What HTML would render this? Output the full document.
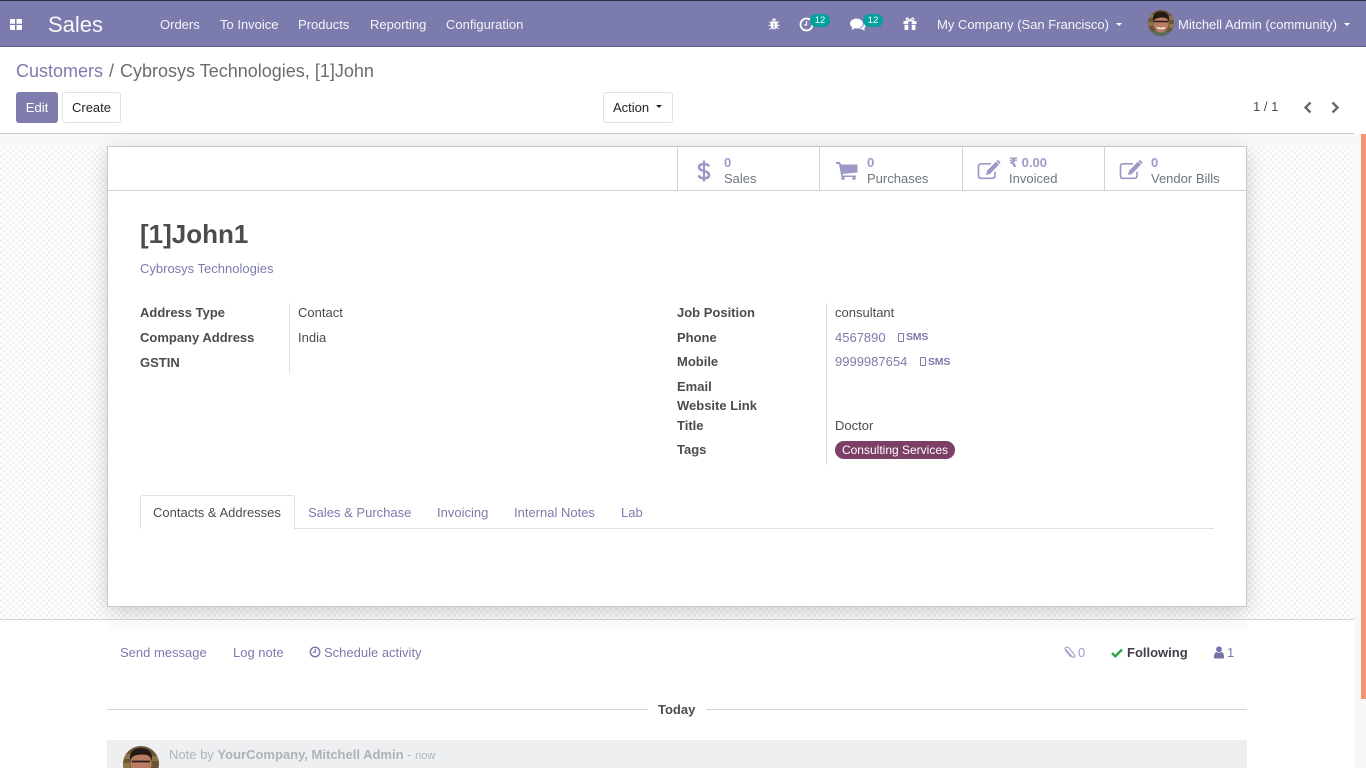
<!DOCTYPE html>
<html lang="en"><head><meta charset="utf-8"><title>Cybrosys Technologies, [1]John</title>
<style>
*{box-sizing:border-box}
html,body{margin:0;padding:0;width:1366px;height:768px;overflow:hidden;background:#fff;font-family:"Liberation Sans",sans-serif;font-size:13px;color:#4c4c4c}
.a{position:absolute;white-space:nowrap;line-height:20px}
.nav{color:#fff;opacity:.92}
.l{color:#7C7BAD}
.b{font-weight:700}
svg{position:absolute;display:block}
.badge{position:absolute;background:#00A09D;color:#fff;border-radius:7px;font-size:9.5px;line-height:13px;height:13px;width:20px;text-align:center}
.stat{position:absolute;top:147px;height:43px;border-left:1px solid #ced4da}
</style></head><body>

<div style="position:absolute;left:0;top:0;width:1366px;height:47px;background:#7C7BAD;border-top:1px solid #2a2a40;border-bottom:1px solid #62619a"></div>
<svg style="left:10px;top:19px" width="12" height="11" viewBox="0 0 12 11"><path fill="#fff" d="M0 1q0-1 1-1h4v4.800H0zM6.500 0H11q1 0 1 1v3.800H6.500zM0 6h5v5H1q-1 0-1-1zM6.500 6H12v4q0 1-1 1H6.500z"/></svg>
<div class="a" style="left:48px;top:12px;font-size:22px;line-height:26px;color:#fff;opacity:.95">Sales</div>
<div class="a nav" style="left:160px;top:15px">Orders</div>
<div class="a nav" style="left:220px;top:15px">To Invoice</div>
<div class="a nav" style="left:298px;top:15px">Products</div>
<div class="a nav" style="left:370px;top:15px">Reporting</div>
<div class="a nav" style="left:446px;top:15px">Configuration</div>

<svg style="left:768px;top:18px" width="12" height="12" viewBox="0 0 12 12"><path fill="#fff" d="M4 2.500a2 2 0 0 1 4 0zM3.200 3.300h5.600L9 4.500l1.500-1.300.6.700L9.300 5.600v1.300h2.200v1H9.300l-.2 1.100 1.900 1.500-.6.700-1.700-1.400Q7.700 11.500 6.400 11.500V5H5.600v6.500q-1.300 0-2.100-1.200L1.800 11.700l-.6-.7 1.900-1.500L2.900 7.900H.5v-1h2.200V5.600L.9 3.900l.6-.7L3 4.500z"/></svg>
<svg style="left:799px;top:17px" width="15" height="15" viewBox="0 0 15 15"><circle cx="7.500" cy="7.500" r="6" fill="none" stroke="#fff" stroke-width="1.800"/><path d="M7.500 4v4H5.300" fill="none" stroke="#fff" stroke-width="1.200"/></svg>
<div class="badge" style="left:810px;top:14px;width:20px">12</div>
<svg style="left:850px;top:18px" width="16" height="14" viewBox="0 0 16 14"><ellipse cx="6.500" cy="5.500" rx="6.500" ry="5" fill="#fff"/><path fill="#fff" d="M2.500 8.500 1.500 12l4-2zM13.500 4.500Q16 6 15.500 8.500 15 10 14 10.500l1 2.500-3.500-2q-2 .2-3.500-.5 4 0 5.500-3 .6-1.500 0-3z"/></svg>
<div class="badge" style="left:863px;top:14px;width:20px">12</div>
<svg style="left:903px;top:17px" width="14" height="14" viewBox="0 0 14 14"><path fill="#fff" d="M.5 4h4.800v3H.5zM8.700 4h4.800v3H8.700zM1.500 7.800h3.800V13H2.500q-1 0-1-1zM8.700 7.800h3.800V12q0 1-1 1H8.700z"/><path fill="none" stroke="#fff" stroke-width="1.200" d="M7 3.800 5 1.200Q3.500.5 3.200 2t3.800 1.800zM7 3.800 9 1.200q1.500-.7 1.800.8T7 3.800z"/></svg>
<div class="a nav" style="left:937px;top:15px">My Company (San Francisco)</div>
<div style="position:absolute;left:1116px;top:23px;border:3.500px solid transparent;border-top-color:#fff;border-bottom:0;width:0;height:0"></div>
<svg style="left:1148px;top:10px" width="26" height="26" viewBox="0 0 26 26"><defs><clipPath id="c1"><circle cx="13" cy="13" r="13"/></clipPath></defs><g clip-path="url(#c1)"><rect width="26" height="26" fill="#6b5536"/><rect x="0" y="4" width="5" height="4" fill="#8f7448"/><rect x="0" y="12" width="5" height="4" fill="#8f7448"/><rect x="21" y="6" width="5" height="4" fill="#8f7448"/><rect x="21" y="14" width="5" height="4" fill="#8f7448"/><path fill="#5d6d5c" d="M1 26q2-6 12-6t12 6z"/><ellipse cx="13" cy="13.500" rx="7.500" ry="9" fill="#b97c62"/><path fill="#241a16" d="M5 12Q4 1.500 13 1.500T21 12Q20 7 13 7.500T5 12z"/><path d="M6 11.500h6M14 11.500h6M12 11.500h2" stroke="#2a1e1a" stroke-width="1.400"/><path d="M9 17.500q4 2 8 0" stroke="#f4e8e2" stroke-width="1.600" fill="none"/></g></svg>
<div class="a nav" style="left:1178px;top:15px">Mitchell Admin (community)</div>
<div style="position:absolute;left:1344px;top:23px;border:3.500px solid transparent;border-top-color:#fff;border-bottom:0;width:0;height:0"></div>

<div class="a" style="left:16px;top:59px;font-size:18px;line-height:24px;color:#6c6c6c"><span class="l">Customers</span><span style="margin:0 6px;">/</span>Cybrosys Technologies, [1]John</div>
<div class="a" style="left:16px;top:92px;width:42px;height:31px;background:#7C7BAD;border-radius:3px;color:#fff;text-align:center;line-height:31px;opacity:.98">Edit</div>
<div class="a" style="left:62px;top:92px;width:59px;height:31px;background:#fff;border:1px solid #dee2e6;border-radius:3px;color:#212529;text-align:center;line-height:29px">Create</div>
<div class="a" style="left:603px;top:92px;width:70px;height:31px;background:#fff;border:1px solid #dee2e6;border-radius:3px;color:#212529;line-height:29px;padding-left:9px">Action</div>
<div style="position:absolute;left:656px;top:105px;border:3.500px solid transparent;border-top-color:#212529;border-bottom:0;width:0;height:0"></div>
<div class="a" style="left:1253px;top:97px;color:#4c4c4c">1 / 1</div>
<svg style="left:1303px;top:101px" width="10" height="13" viewBox="0 0 10 13"><path d="M7.500 1.500 2.500 6.500l5 5" fill="none" stroke="#666b70" stroke-width="2.400"/></svg>
<svg style="left:1330px;top:101px" width="10" height="13" viewBox="0 0 10 13"><path d="M2.500 1.500l5 5-5 5" fill="none" stroke="#666b70" stroke-width="2.400"/></svg>

<div style="position:absolute;left:0;top:133px;width:1354px;height:487px;border-top:1px solid #ccc;border-bottom:1px solid #d8d8d8;background:repeating-conic-gradient(#f3f3f3 0 25%,#fff 0 50%) 0 0/6px 6px"></div>
<div style="position:absolute;left:0;top:134px;width:1354px;height:12px;background:linear-gradient(#f7f7f7,#f9f9f9)"></div>
<div style="position:absolute;left:1354px;top:134px;width:12px;height:634px;background:#f8f8f8"></div>
<div style="position:absolute;left:1361px;top:134px;width:5px;height:565px;background:#F59470"></div>

<div style="position:absolute;left:107px;top:146px;width:1140px;height:461px;background:#fff;border:1px solid #c8c8d4;box-shadow:0 5px 20px -1px rgba(0,0,0,.2)"></div>
<div style="position:absolute;left:108px;top:190px;width:1138px;height:1px;background:#ced4da"></div>

<div class="stat" style="left:677px;width:143px"></div>
<div class="stat" style="left:819px;width:143px"></div>
<div class="stat" style="left:962px;width:143px"></div>
<div class="stat" style="left:1104px;width:142px"></div>
<svg style="left:696px;top:159px" width="16" height="24" viewBox="0 0 16 24"><path d="M13 7.500Q12 5 8 5 3 5 3 8.300 3 10.800 8 12t5 4q0 3.300-5 3.300-4.500 0-5.300-3" fill="none" stroke="#9b9ac7" stroke-width="2.600"/><path d="M8 1.500v21" stroke="#9b9ac7" stroke-width="2.200"/></svg>
<svg style="left:836px;top:162px" width="22" height="18" viewBox="0 0 22 18"><path fill="#9b9ac7" d="M0 0h4l1 2.500h16.500v8L6.500 12l.3 1.500H20V15H5.300L3 2H0z"/><circle cx="7" cy="16.300" r="1.700" fill="#9b9ac7"/><circle cx="18" cy="16.300" r="1.700" fill="#9b9ac7"/></svg>
<svg style="left:977px;top:160px" width="24" height="20" viewBox="0 0 24 20"><path d="M14 3.800H4Q1.500 3.800 1.500 6.300v9.500q0 2.500 2.500 2.500h11.500q2.500 0 2.500-2.500v-4" fill="none" stroke="#9b9ac7" stroke-width="1.700"/><path fill="#9b9ac7" d="M19 1.500l3 3L13 14l-4 1 1-4.200zM20 .5q1-.7 1.800 0l1.200 1.200q.7.900 0 1.800l-.5.500-3-3z"/></svg>
<svg style="left:1119px;top:160px" width="24" height="20" viewBox="0 0 24 20"><path d="M14 3.800H4Q1.500 3.800 1.500 6.300v9.500q0 2.500 2.500 2.500h11.500q2.500 0 2.500-2.500v-4" fill="none" stroke="#9b9ac7" stroke-width="1.700"/><path fill="#9b9ac7" d="M19 1.500l3 3L13 14l-4 1 1-4.200zM20 .5q1-.7 1.800 0l1.200 1.200q.7.900 0 1.800l-.5.500-3-3z"/></svg>
<div class="a b" style="left:724px;top:153px;color:#9b9ac7;font-size:13px">0</div>
<div class="a" style="left:724px;top:169px;color:#6c757d">Sales</div>
<div class="a b" style="left:867px;top:153px;color:#9b9ac7">0</div>
<div class="a" style="left:867px;top:169px;color:#6c757d">Purchases</div>
<div class="a b" style="left:1009px;top:153px;color:#9b9ac7;font-family:'Liberation Sans','DejaVu Sans',sans-serif">₹ 0.00</div>
<div class="a" style="left:1009px;top:169px;color:#6c757d">Invoiced</div>
<div class="a b" style="left:1151px;top:153px;color:#9b9ac7">0</div>
<div class="a" style="left:1151px;top:169px;color:#6c757d">Vendor Bills</div>

<div class="a b" style="left:140px;top:218px;font-size:26px;line-height:32px;color:#4c4c4c">[1]John1</div>
<div class="a l" style="left:140px;top:259px">Cybrosys Technologies</div>

<div style="position:absolute;left:289px;top:303px;width:1px;height:70px;background:#ddd"></div>
<div class="a b" style="left:140px;top:303px">Address Type</div>
<div class="a" style="left:298px;top:303px">Contact</div>
<div class="a b" style="left:140px;top:328px">Company Address</div>
<div class="a" style="left:298px;top:328px">India</div>
<div class="a b" style="left:140px;top:353px">GSTIN</div>

<div style="position:absolute;left:826px;top:303px;width:1px;height:162px;background:#ddd"></div>
<div class="a b" style="left:677px;top:303px">Job Position</div>
<div class="a" style="left:835px;top:303px">consultant</div>
<div class="a b" style="left:677px;top:328px">Phone</div>
<div class="a l" style="left:835px;top:328px">4567890</div>
<div style="position:absolute;left:898px;top:333px;width:6px;height:9px;border:1.300px solid #7C7BAD;border-radius:1px"></div>
<div class="a l b" style="left:906px;top:327px;font-size:10.500px;letter-spacing:-.2px">SMS</div>
<div class="a b" style="left:677px;top:352px">Mobile</div>
<div class="a l" style="left:835px;top:352px">9999987654</div>
<div style="position:absolute;left:920px;top:357px;width:6px;height:9px;border:1.300px solid #7C7BAD;border-radius:1px"></div>
<div class="a l b" style="left:928px;top:352px;font-size:10.500px;letter-spacing:-.2px">SMS</div>
<div class="a b" style="left:677px;top:377px">Email</div>
<div class="a b" style="left:677px;top:396px">Website Link</div>
<div class="a b" style="left:677px;top:416px">Title</div>
<div class="a" style="left:835px;top:416px">Doctor</div>
<div class="a b" style="left:677px;top:440px">Tags</div>
<div class="a" style="left:835px;top:441px;width:120px;height:18px;background:#7C3F66;border-radius:9px;color:#fff;font-size:12px;line-height:18px;text-align:center">Consulting Services</div>

<div style="position:absolute;left:140px;top:528px;width:1074px;height:1px;background:#dee2e6"></div>
<div style="position:absolute;left:140px;top:495px;width:155px;height:34px;background:#fff;border:1px solid #dee2e6;border-bottom:0;border-radius:3px 3px 0 0"></div>
<div class="a" style="left:153px;top:503px">Contacts &amp; Addresses</div>
<div class="a l" style="left:308px;top:503px">Sales &amp; Purchase</div>
<div class="a l" style="left:437px;top:503px">Invoicing</div>
<div class="a l" style="left:514px;top:503px">Internal Notes</div>
<div class="a l" style="left:621px;top:503px">Lab</div>

<div style="position:absolute;left:0;top:620px;width:1354px;height:148px;background:#fff"></div>
<div style="position:absolute;left:107px;top:620px;width:1140px;height:14px;background:linear-gradient(#f8f8f8,#fff)"></div>
<div class="a l" style="left:120px;top:643px">Send message</div>
<div class="a l" style="left:233px;top:643px">Log note</div>
<svg style="left:309px;top:646px" width="12" height="12" viewBox="0 0 12 12"><circle cx="6" cy="6" r="4.700" fill="none" stroke="#7C7BAD" stroke-width="1.500"/><path d="M6.300 3v3.300H3.800" fill="none" stroke="#7C7BAD" stroke-width="1.200"/></svg>
<div class="a l" style="left:324px;top:643px">Schedule activity</div>
<svg style="left:1064px;top:646px" width="12" height="13" viewBox="0 0 12 13"><path d="M2 3.500 8 10.500q1.500 1.500 2.500.5t-.3-2.500L5 2Q3.500.5 2 1.500T1.500 4.500L7 11" fill="none" stroke="#a5a4cb" stroke-width="1.200"/></svg>
<div class="a" style="left:1078px;top:643px;color:#9b9ac7">0</div>
<svg style="left:1111px;top:648px" width="12" height="10" viewBox="0 0 12 10"><path d="M1 5l3.300 3.300L11 1.500" fill="none" stroke="#28a745" stroke-width="2.400"/></svg>
<div class="a b" style="left:1127px;top:643px;color:#3f3f46">Following</div>
<svg style="left:1214px;top:646px" width="10" height="13" viewBox="0 0 10 13"><circle cx="5" cy="3.300" r="2.900" fill="#7471a8"/><path fill="#7471a8" d="M0 11.500Q0 6.500 2.500 6q2.500 1.500 5 0 2.500.5 2.500 5.500 0 1-1 1H1q-1 0-1-1z"/></svg>
<div class="a l" style="left:1227px;top:643px">1</div>

<div style="position:absolute;left:107px;top:709px;width:541px;height:1px;background:#d3d3d3"></div>
<div style="position:absolute;left:706px;top:709px;width:541px;height:1px;background:#d3d3d3"></div>
<div class="a b" style="left:658px;top:700px;color:#4c4c4c">Today</div>

<div style="position:absolute;left:107px;top:740px;width:1140px;height:28px;background:#eeeff1"></div>
<svg style="left:123px;top:746px" width="36" height="22" viewBox="0 0 36 22"><defs><clipPath id="c2"><circle cx="18" cy="18" r="18"/></clipPath></defs><g clip-path="url(#c2)"><rect width="36" height="36" fill="#6b5536"/><rect y="8" width="7" height="5" fill="#8f7448"/><rect y="17" width="7" height="5" fill="#8f7448"/><rect x="29" y="10" width="7" height="5" fill="#8f7448"/><ellipse cx="18" cy="18" rx="10.500" ry="12.500" fill="#b97c62"/><path fill="#241a16" d="M7 15Q6 2 18 2t11 13Q28 8 18 8.500T7 15z"/><path d="M9 15.500h7M20 15.500h7M16 15.500h4" stroke="#2a1e1a" stroke-width="1.700"/></g></svg>
<div class="a" style="left:169px;top:745px;color:#adb5bd">Note by <span class="b" style="color:#adb2ba">YourCompany, Mitchell Admin</span> - <span style="font-size:11px">now</span></div>
</body></html>
